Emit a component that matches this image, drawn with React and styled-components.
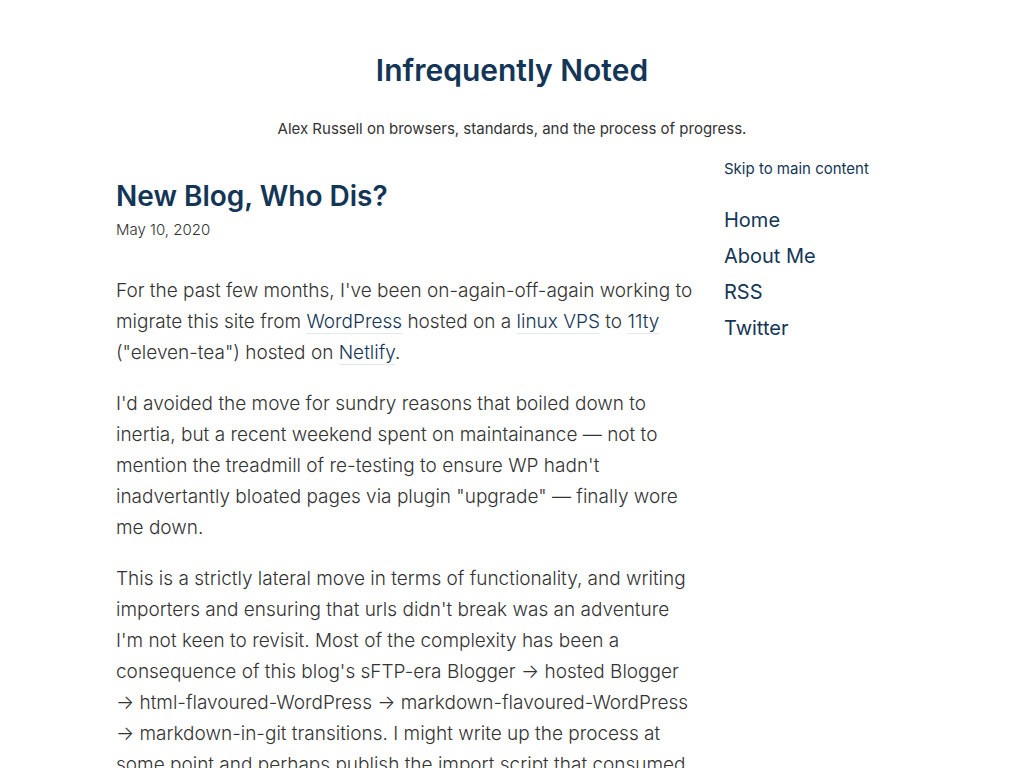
import React from "react";
import styled, { createGlobalStyle } from "styled-components";

const GlobalStyle = createGlobalStyle`
  *, *::before, *::after { box-sizing: border-box; }
  body {
    margin: 0;
    background: #fff;
    color: #333;
    font-family: Inter, "Liberation Sans", sans-serif;
    font-size: 19px;
    font-weight: 300;
    line-height: 31px;
  }
`;

const Page = styled.div`
  height: 100vh;
  overflow: hidden;
`;

const Header = styled.header`
  padding-top: 48px;
  text-align: center;
`;

const SiteTitle = styled.h1`
  margin: 0;
  color: #143656;
  font-size: 30px;
  font-weight: 600;
  line-height: 44px;
`;

const Tagline = styled.p`
  margin: 24px 0 0;
  font-size: 15px;
  font-weight: 400;
  line-height: 26px;
`;

const Columns = styled.div`
  display: grid;
  grid-template-columns: minmax(0, 580px) minmax(0, 184px);
  column-gap: 28px;
  justify-content: center;
  padding: 0 32px;
  margin-top: 14px;
`;

const Article = styled.article`
  padding-top: 20px;
`;

const PostTitle = styled.h2`
  margin: 0;
  color: #143656;
  font-size: 28px;
  font-weight: 600;
  line-height: 40px;
`;

const PostDate = styled.time`
  display: block;
  margin-bottom: 31px;
  font-size: 15px;
  line-height: 28px;
`;

const Paragraph = styled.p`
  margin: 0 0 20px;
`;

const TextLink = styled.a`
  color: #143656;
  text-decoration: none;
  border-bottom: 1px solid #e4e9ee;
`;

const Sidebar = styled.aside`
  color: #143656;
`;

const SkipLink = styled.a`
  display: block;
  color: inherit;
  font-size: 15px;
  font-weight: 400;
  line-height: 26px;
  text-decoration: none;
`;

const NavList = styled.ul`
  margin: 20px 0 0;
  padding: 0;
  list-style: none;
`;

const NavLink = styled.a`
  color: inherit;
  font-size: 20px;
  font-weight: 400;
  line-height: 36px;
  text-decoration: none;
`;

const navItems = ["Home", "About Me", "RSS", "Twitter"];

export default function App() {
  return (
    <Page>
      <GlobalStyle />
      <Header>
        <SiteTitle>Infrequently Noted</SiteTitle>
        <Tagline>Alex Russell on browsers, standards, and the process of progress.</Tagline>
      </Header>
      <Columns>
        <Article id="main">
          <PostTitle>New Blog, Who Dis?</PostTitle>
          <PostDate dateTime="2020-05-10">May 10, 2020</PostDate>
          <Paragraph>
            For the past few months, I've been on-again-off-again working to migrate this site from{" "}
            <TextLink href="#wordpress">WordPress</TextLink> hosted on a{" "}
            <TextLink href="#vps">linux VPS</TextLink> to <TextLink href="#11ty">11ty</TextLink>{" "}
            ("eleven-tea") hosted on <TextLink href="#netlify">Netlify</TextLink>.
          </Paragraph>
          <Paragraph>
            I'd avoided the move for sundry reasons that boiled down to inertia, but a recent weekend
            spent on maintainance — not to mention the treadmill of re-testing to ensure WP hadn't
            inadvertantly bloated pages via plugin "upgrade" — finally wore me down.
          </Paragraph>
          <Paragraph>
            This is a strictly lateral move in terms of functionality, and writing importers and
            ensuring that urls didn't break was an adventure I'm not keen to revisit. Most of the
            complexity has been a consequence of this blog's sFTP-era Blogger → hosted Blogger →
            html-flavoured-WordPress → markdown-flavoured-WordPress → markdown-in-git transitions. I
            might write up the process at some point and perhaps publish the import script that
            consumed
          </Paragraph>
        </Article>
        <Sidebar>
          <SkipLink href="#main">Skip to main content</SkipLink>
          <nav>
            <NavList>
              {navItems.map((item) => (
                <li key={item}>
                  <NavLink href={`#${item}`}>{item}</NavLink>
                </li>
              ))}
            </NavList>
          </nav>
        </Sidebar>
      </Columns>
    </Page>
  );
}
